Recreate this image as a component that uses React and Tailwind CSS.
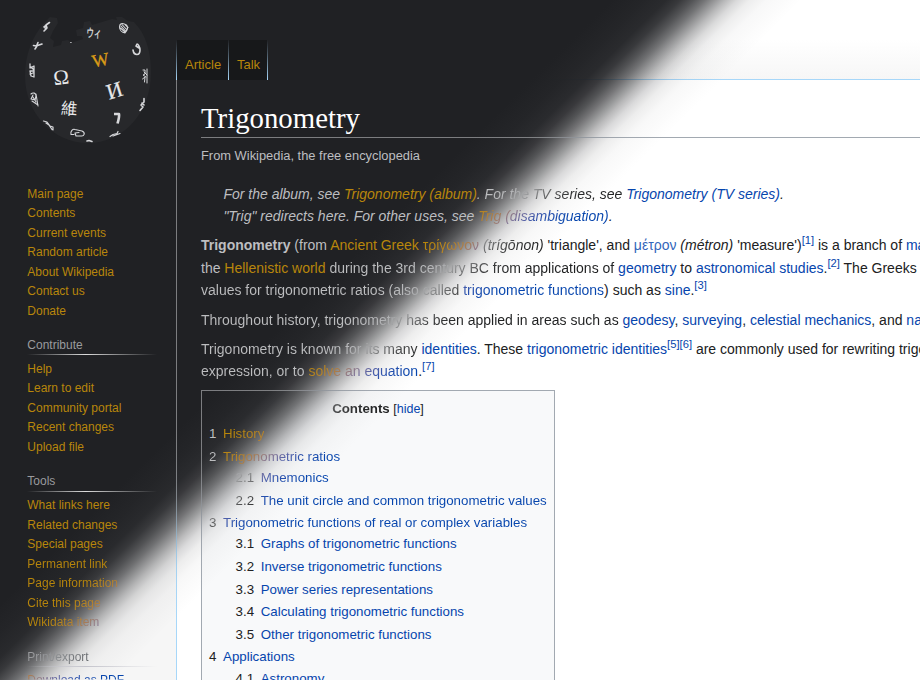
import React from "react";

// Opacity of the dark theme along the diagonal: [distance in px, alpha].
const PROFILE = [
  [430, 1], [452, 0.98], [468, 0.955], [478, 0.89], [487, 0.77], [495, 0.63],
  [503, 0.46], [510, 0.31], [518, 0.17], [527, 0.08], [539, 0.03], [564, 0],
];

// Lettering changes colour a little later along the diagonal than the backdrop.
const TEXT_PROFILE = [
  [478, 1], [495, 0.95], [506, 0.82], [513, 0.66], [519, 0.5], [527, 0.31],
  [535, 0.16], [547, 0.05], [565, 0],
];

// Diagonal blend between a dark-theme and a light-theme colour.
function blend(dark, light, profile = PROFILE) {
  const stops = profile.map(([p, a]) => {
    const c = dark.map((v, i) => Math.round(v * a + light[i] * (1 - a)));
    return `rgb(${c.join(",")}) ${p}px`;
  });
  return { backgroundImage: `linear-gradient(135.36deg, ${stops.join(", ")})` };
}

const BG = [32, 33, 36];
const overlayStops = PROFILE.map(([p, a]) => `rgba(32,33,36,${a}) ${p}px`).join(", ");
const overlay = { backgroundImage: `linear-gradient(135.36deg, ${overlayStops})` };

const page = blend(BG, [255, 255, 255]);
const tocBg = blend(BG, [248, 249, 250]);
const rule = blend([124, 125, 128], [162, 169, 177]);
const sideRule = blend([124, 125, 128], [167, 215, 249]);
const textFade = blend([189, 190, 192], [32, 33, 34], TEXT_PROFILE);
const headFade = blend([154, 155, 158], [84, 89, 93], TEXT_PROFILE);

// Links go from amber to blue by way of a muted violet.
const LINK_STOPS = [
  [474, "#b8860b"], [492, "#b58328"], [502, "#a97c50"], [509, "#977b7d"],
  [517, "#7d7399"], [526, "#5562a8"], [536, "#2c52ad"], [556, "#0645ad"],
];
const linkFade = {
  backgroundImage: `linear-gradient(135.36deg, ${LINK_STOPS.map(([p, c]) => `${c} ${p}px`).join(", ")})`,
};

const D = ({ children }) => <span className="text-[#bdbec0]">{children}</span>;
const T = ({ children }) => <span className="text-[#202122]">{children}</span>;
const L = ({ children }) => <a className="text-[#0645ad]">{children}</a>;
const G = ({ children }) => <a className="text-[#b8860b]">{children}</a>;
const TF = ({ children }) => (
  <span className="bg-clip-text bg-fixed text-transparent" style={textFade}>{children}</span>
);
const LF = ({ children }) => (
  <a className="bg-clip-text bg-fixed text-transparent" style={linkFade}>{children}</a>
);
const Sup = ({ children }) => (
  <sup className="static align-super text-[11.2px] leading-none text-[#0645ad]">{children}</sup>
);

function Globe() {
  return (
    <svg className="block" width="176" height="160" viewBox="0 0 176 160">
      <path
        fill="#27282b"
        d="M45 22 L50 17 L57 18 L58 23 L53 31 L50 38 L54 41 L53 47 L61 45 L62 41 L68 40 L71 43 L83 39 L82 36 L77 36 L76 30 L83 28 L84 22 L90 21 L92 25 L112 19 L117 20 L116 17 L122 17 L128 21 L134 22 L139 28 C147 39 151 54 151 73 C151 113 123 143 88 143 C53 143 25 113 25 76 C25 55 32 36 45 22 Z"
      />
      <g fill="#e7e8ea" fontFamily="'Liberation Serif', 'Noto Sans CJK JP', serif">
        <text x="53.500" y="84.500" fontSize="21" transform="rotate(-7 61 78)">Ω</text>
        <text x="106.500" y="97.500" fontSize="22" stroke="#e7e8ea" strokeWidth=".2" transform="rotate(-17 115 90)">И</text>
        <text x="61" y="114.500" fontSize="16.500" transform="rotate(4 69 108)" fontFamily="'Noto Sans CJK TC', sans-serif">維</text>
        <text x="86.500" y="37.500" fontSize="12" stroke="#e7e8ea" strokeWidth=".2" textLength="15" lengthAdjust="spacingAndGlyphs" transform="rotate(2 94 33)" fontFamily="'Noto Sans CJK JP', sans-serif">ウィ</text>
        <text x="92" y="66" fontSize="18" fill="#d99a17" stroke="#d99a17" strokeWidth=".35" transform="rotate(-11 101 60)">W</text>
      </g>
      <g fill="none" stroke="#d6d7da" strokeWidth="1.600" strokeLinecap="round" strokeLinejoin="round">
        <path d="M49.500 22.500 L46 25 L47 28 L44 31 M46 25.500 L44 27 M47 28 L45 28" />
        <path d="M33.500 45.500 L36.500 46 L38 42.500 M36 46 L42 44 M37 46 L35 49" />
        <path d="M30 64 V68 L34 66 V77 L31 76 L30 71 L34 71 M31 67 L34 70 M30 74 L33 73" strokeWidth="1.300" />
        <path d="M31 94 C33 92 36 93 36 96 L35 100 L31 99 L33 95 M36 94 L38 106 M32 101 L38 105 M33 97 L36 102" strokeWidth="1.100" />
        <path d="M43.500 121 L47 122 L50 126 L53 127 L53 130 M46 123 L49 125 L52 129.500" strokeWidth="1.200" />
        <path d="M71 134.500 C70 131 73 128.500 75 129.500 L82 131 C86 133 84 136.500 81 136 L76 136 L75 133 L79 132.500 M71 134.500 L74 134.500" strokeWidth="1.100" />
        <path d="M87 141 L89 140.500 L92 141.500" />
        <path d="M110 136.500 L113 134.500 L117 133.500 L118 131.500 M113 136 L120 133.500" strokeWidth="1.200" />
        <path d="M114 114 H119 C119.500 117 118.500 120 117.500 123.500" strokeWidth="2.600" strokeLinecap="butt" />
        <path d="M144 98.500 L144 102 L141 105 L143 107 L140 110.500 M142 103 L144 105" />
        <path d="M143 70 H145 V74 L143 75 L146 77 M147 69 V83 M144 72 L147 75 M142.500 79 L145 77 L144.500 82" strokeWidth="1" />
        <path d="M133 50 C134 56 140 56 140 50 C140 47 138 44 137 44 L136 46 L139 48" strokeWidth="1.600" />
        <path d="M119.500 27 C119.500 23.500 122 23 124.500 24 C128 25 129 28 125 33 C122 32.500 119.500 30 119.500 27 M122 24.500 L127 30 M125 24.500 L128 27.500 M120.500 28 L125 32 M121 26 L126 31.500" strokeWidth="1.100" />
        <path d="M70.500 42.500 H71.300" strokeWidth=".8" />
      </g>
    </svg>
  );
}

const NAV = ["Main page", "Contents", "Current events", "Random article", "About Wikipedia", "Contact us", "Donate"];
const CONTRIBUTE = ["Help", "Learn to edit", "Community portal", "Recent changes", "Upload file"];
const TOOLS = [
  "What links here", "Related changes", "Special pages", "Permanent link",
  "Page information", "Cite this page", "Wikidata item",
];

function Links({ items, from = 99 }) {
  return (
    <ul>
      {items.map((t, i) => (
        <li key={t} className="h-[19.5px] leading-[19.5px]">
          {i >= from ? <LF>{t}</LF> : <G>{t}</G>}
        </li>
      ))}
    </ul>
  );
}

function Heading({ children, fade }) {
  return (
    <div className="h-[38.8px] pt-[17.1px]">
      <h3 className="h-[16.2px] leading-[15px]">
        {fade ? (
          <span className="bg-clip-text bg-fixed text-transparent" style={headFade}>{children}</span>
        ) : (
          <span className="text-[#9a9b9e]">{children}</span>
        )}
      </h3>
      <div className={fade
        ? "h-px w-[130px] bg-linear-to-r from-transparent via-[#c4c4cc] via-45% to-transparent"
        : "h-px w-[130px] bg-linear-to-r from-transparent via-[#dcdcdc] via-45% to-transparent"}
      />
    </div>
  );
}

function Row({ n, children, num: Num = T, link: Link = L, sub }) {
  return (
    <li className="mb-[1.33px]">
      <div className="flex leading-[21.28px]">
        <span className="pr-[6.65px]"><Num>{n}</Num></span>
        <Link>{children}</Link>
      </div>
      {sub && <ul className="ml-[26.6px]">{sub}</ul>}
    </li>
  );
}

const TabEdge = () => <div className="w-px bg-linear-to-b from-[#202124] to-[#a7d7f9]" />;

export default function App() {
  return (
    <div
      className="flex h-[680px] w-[920px] overflow-hidden whitespace-nowrap bg-fixed font-['Liberation_Sans',Arial,sans-serif]"
      style={page}
    >
      <aside className="h-full w-[176px] shrink-0 overflow-hidden bg-[#f6f6f6] bg-fixed text-[12px]" style={overlay}>
        <Globe />
        <nav className="pt-[24.6px] pl-[27.3px]">
          <Links items={NAV} />
          <Heading>Contribute</Heading>
          <Links items={CONTRIBUTE} />
          <Heading>Tools</Heading>
          <Links items={TOOLS} from={3} />
          <Heading fade>Print/export</Heading>
          <Links items={["Download as PDF"]} from={0} />
        </nav>
      </aside>

      <div className="flex h-full w-[744px] flex-col">
        <header className="h-20 shrink-0 bg-linear-to-b from-white from-50% to-[#f6f6f6]">
          <div className="flex h-full flex-col bg-fixed" style={overlay}>
            <div className="flex h-20 items-end">
              <div className="flex h-10 text-[13px] leading-[49px]">
                <TabEdge />
                <div className="w-[51px] bg-[#17181a] pl-2"><G>Article</G></div>
                <TabEdge />
                <div className="w-[38px] bg-[#17181a] pl-2"><G>Talk</G></div>
                <TabEdge />
              </div>
              <div className="h-px flex-1 bg-fixed" style={blend(BG, [167, 215, 249])} />
            </div>
          </div>
        </header>

        <div className="flex min-h-0 flex-1">
          <div className="w-px shrink-0 bg-fixed" style={sideRule} />
          <main className="w-[743px] overflow-hidden pt-5 pl-6 text-[14px] leading-[22.4px]">
            <h1 className="h-[37px] font-['Liberation_Serif',serif] text-[28.8px] leading-[37.4px] text-white">
              Trigonometry
            </h1>
            <div className="h-px bg-fixed" style={rule} />
            <div className="h-[44.6px] pt-[7px] text-[12.88px] leading-[21px]"><D>From Wikipedia, the free encyclopedia</D></div>

            <div className="pl-[22.4px] italic">
              <div>
                <D>For the album, see </D><G>Trigonometry (album)</G><TF>. For the TV series, see </TF>
                <L>Trigonometry (TV series)</L><T>.</T>
              </div>
              <div>
                <D>"Trig" redirects here. For other uses, see </D><LF>Trig (disambiguation)</LF><T>.</T>
              </div>
            </div>

            <div className="mt-[7px]">
              <div className="h-[22.4px]">
                <b><D>Trigonometry</D></b><D> (from </D><G>Ancient Greek</G><D> </D><LF>τρίγωνον</LF>
                <i><TF> (trígōnon)</TF></i><T> 'triangle', and </T>
                <a className="text-[#3366bb]">μέτρον</a><i><T> (métron)</T></i><T> 'measure')</T><Sup>[1]</Sup>
                <T> is a branch of </T><L>mathematics</L>
              </div>
              <div className="h-[22.4px]">
                <D>the </D><G>Hellenistic world</G><TF> during the 3rd century BC from applications of </TF>
                <L>geometry</L><T> to </T><L>astronomical studies</L><T>.</T><Sup>[2]</Sup><T> The Greeks focused</T>
              </div>
              <div className="h-[22.4px]">
                <TF>values for trigonometric ratios (also called </TF><LF>trigonometric functions</LF>
                <T>) such as </T><L>sine</L><T>.</T><Sup>[3]</Sup>
              </div>
            </div>

            <div className="mt-[7px] h-[22.4px]">
              <TF>Throughout history, trigonometry has been applied in areas such as </TF><L>geodesy</L><T>, </T>
              <L>surveying</L><T>, </T><L>celestial mechanics</L><T>, and </T><L>navigation</L>
            </div>

            <div className="mt-[7px]">
              <div className="h-[22.4px]">
                <TF>Trigonometry is known for its many </TF><L>identities</L><T>. These </T>
                <L>trigonometric identities</L><Sup>[5][6]</Sup>
                <T> are commonly used for rewriting trigonometrical</T>
              </div>
              <div className="h-[22.4px]">
                <TF>expression, or to </TF><LF>solve an equation</LF><T>.</T><Sup>[7]</Sup>
              </div>
            </div>

            <div className="mt-[7px] w-[354px] bg-fixed p-px" style={rule}>
              <div className="h-[400px] bg-fixed p-[7px] text-[13.3px] leading-[21.28px]" style={tocBg}>
                <div className="text-center">
                  <b><TF>Contents</TF></b>
                  <span className="text-[12.5px]"><T> [</T><L>hide</L><T>]</T></span>
                </div>
                <ul className="mt-[3px]">
                  <Row n="1" num={D} link={LF}>History</Row>
                  <Row n="2" num={TF} link={LF} sub={<>
                    <Row n="2.1" num={TF} link={LF}>Mnemonics</Row>
                    <Row n="2.2" num={TF} link={LF}>The unit circle and common trigonometric values</Row>
                  </>}>Trigonometric ratios</Row>
                  <Row n="3" num={TF} link={LF} sub={<>
                    <Row n="3.1">Graphs of trigonometric functions</Row>
                    <Row n="3.2">Inverse trigonometric functions</Row>
                    <Row n="3.3">Power series representations</Row>
                    <Row n="3.4">Calculating trigonometric functions</Row>
                    <Row n="3.5">Other trigonometric functions</Row>
                  </>}>Trigonometric functions of real or complex variables</Row>
                  <Row n="4" sub={<Row n="4.1">Astronomy</Row>}>Applications</Row>
                </ul>
              </div>
            </div>
          </main>
        </div>
      </div>
    </div>
  );
}
